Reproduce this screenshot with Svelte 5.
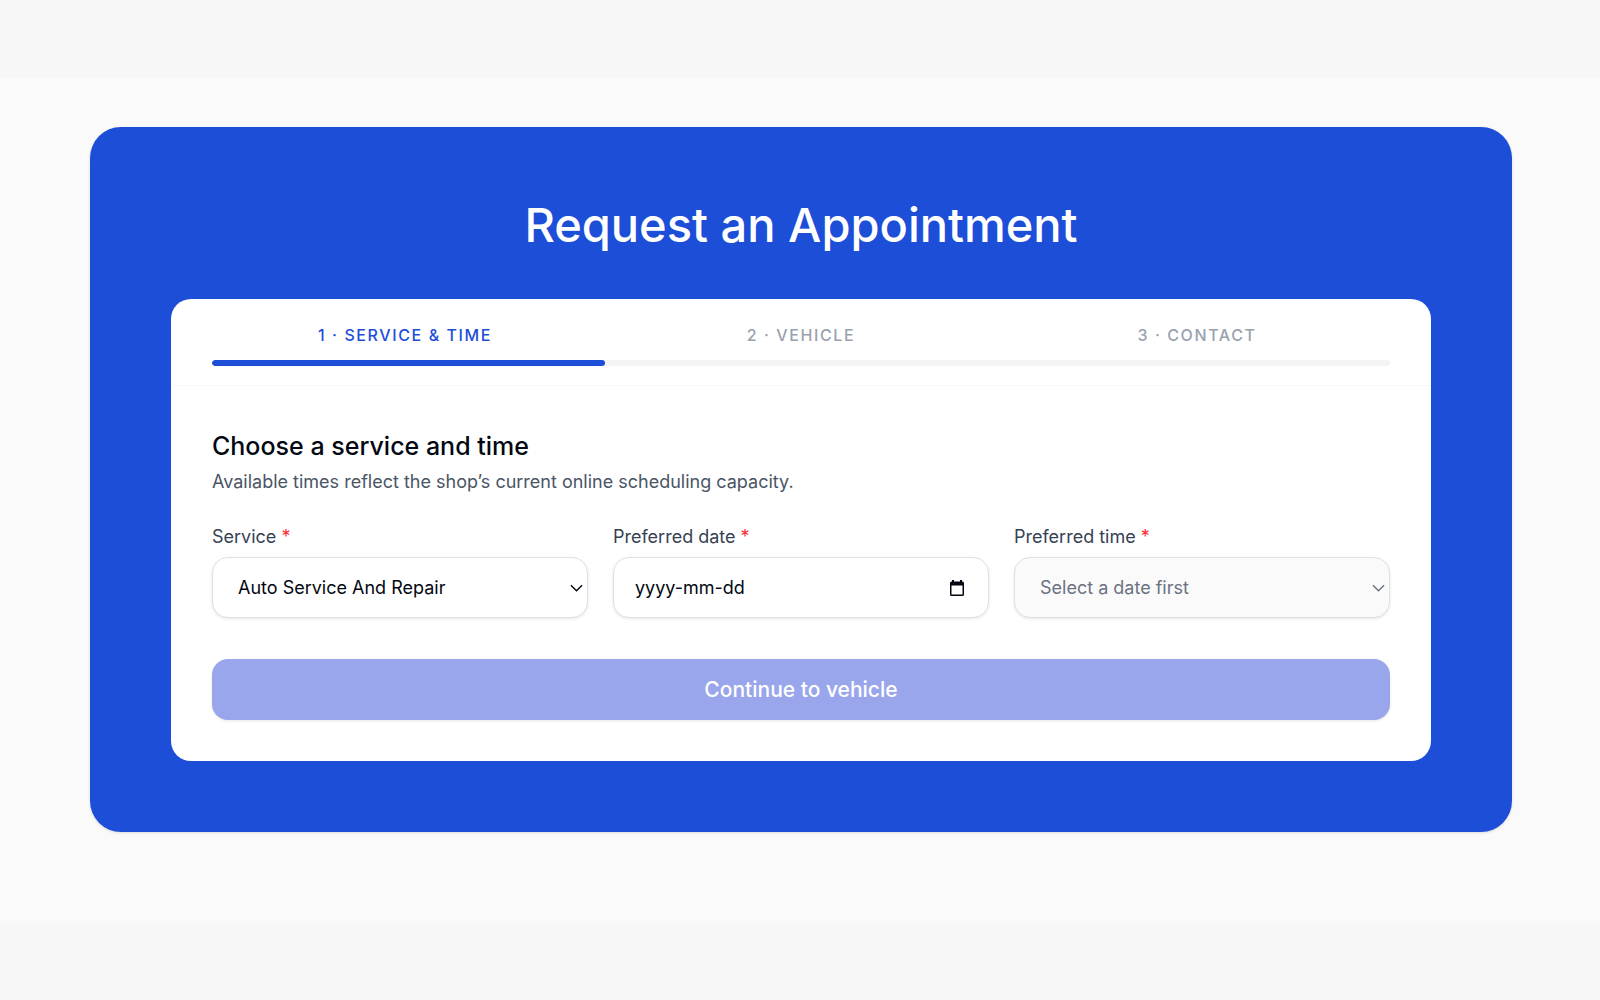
<script lang="ts">
  const steps = ['Service & time', 'Vehicle', 'Contact']
  const services = ['Auto Service And Repair']
  const times = []

  let current = $state(0)
  let service = $state(services[0])
  let date = $state('')
  let time = $state('')
  let dateInput

  let progress = $derived(((current + 1) / steps.length) * 100)
  let ready = $derived(service !== '' && date !== '' && time !== '')

  function handleSubmit(e) {
    e.preventDefault()
    if (ready && current < steps.length - 1) current += 1
  }
</script>

{#snippet chevron()}
  <svg class="chevron" viewBox="0 0 14 8" aria-hidden="true">
    <path d="M1 1l6 6 6-6" />
  </svg>
{/snippet}

<main>
  <div class="band">
    <section class="panel">
      <h1>Request an Appointment</h1>

      <form class="card" onsubmit={handleSubmit}>
        <div class="progress">
          <ol class="steps">
            {#each steps as step, idx (step)}
              <li class:is-active={idx === current}>{idx + 1} · {step}</li>
            {/each}
          </ol>
          <div class="track">
            <div class="bar" style="width: {progress}%"></div>
          </div>
        </div>

        <div class="content">
          <h2>Choose a service and time</h2>
          <p class="hint">Available times reflect the shop’s current online scheduling capacity.</p>

          <div class="fields">
            <div class="field">
              <label for="service">Service <span class="required">*</span></label>
              <div class="control">
                <select id="service" bind:value={service}>
                  {#each services as name}
                    <option value={name}>{name}</option>
                  {/each}
                </select>
                {@render chevron()}
              </div>
            </div>

            <div class="field">
              <label for="date">Preferred date <span class="required">*</span></label>
              <div class="control">
                <input
                  id="date"
                  type="text"
                  placeholder="yyyy-mm-dd"
                  bind:this={dateInput}
                  bind:value={date}
                />
                <button
                  type="button"
                  class="calendar"
                  aria-label="Pick a date"
                  onclick={() => dateInput.focus()}
                >
                  <svg viewBox="0 0 14 16" aria-hidden="true">
                    <path
                      fill-rule="evenodd"
                      d="M2 0h2v1.5h6V0h2v1.5h.5A1.5 1.5 0 0 1 14 3v11.5a1.5 1.5 0 0 1-1.5 1.5h-11A1.5 1.5 0 0 1 0 14.5V3a1.5 1.5 0 0 1 1.5-1.5H2zM1.5 5.5v9h11v-9z"
                    />
                  </svg>
                </button>
              </div>
            </div>

            <div class="field">
              <label for="time">Preferred time <span class="required">*</span></label>
              <div class="control" class:is-disabled={!date}>
                <select id="time" bind:value={time} disabled={!date}>
                  <option value="">Select a date first</option>
                  {#each times as slot}
                    <option value={slot}>{slot}</option>
                  {/each}
                </select>
                {@render chevron()}
              </div>
            </div>
          </div>

          <button type="submit" class="submit" disabled={!ready}>Continue to vehicle</button>
        </div>
      </form>
    </section>
  </div>
</main>

<style>
  :global(body) {
    background: #f7f7f7;
  }

  main {
    padding: 78px 0;
    color: #030712;
    font-family: Inter, 'Open Sans', sans-serif;
    font-size: 18px;
    line-height: 24px;
  }

  .band {
    padding: 49px 88px 91px 90px;
    background: #fafafa;
  }

  .panel {
    max-width: 1422px;
    margin: 0 auto;
    padding: 69px 81px 71px;
    box-sizing: border-box;
    border-radius: 31px;
    background: #1d4ed8;
    box-shadow: 0 1px 3px rgba(0, 0, 0, 0.12);
  }

  h1 {
    margin: 0 0 45px;
    color: #fff;
    font-size: 47px;
    font-weight: 500;
    line-height: 58px;
    text-align: center;
  }

  .card {
    border-radius: 20px;
    background: #fff;
    overflow: hidden;
  }

  .progress {
    padding: 24px 41px 19px;
    border-bottom: 1px solid #f7f7f8;
  }

  .steps {
    display: grid;
    grid-template-columns: repeat(3, 1fr);
    gap: 10px;
    margin: 0 0 13px;
    padding: 0;
    list-style: none;
    color: #99a1af;
    font-size: 16px;
    font-weight: 500;
    letter-spacing: 0.1em;
    text-align: center;
    text-transform: uppercase;
  }

  .steps .is-active {
    color: #1d4ed8;
  }

  .track {
    height: 6px;
    border-radius: 3px;
    background: #f4f4f5;
    overflow: hidden;
  }

  .bar {
    height: 100%;
    border-radius: 3px;
    background: #1d4ed8;
  }

  .content {
    padding: 44px 41px 41px;
  }

  h2 {
    margin: 0 0 8px;
    font-size: 25px;
    font-weight: 500;
    line-height: 32px;
  }

  .hint {
    margin: 0 0 31px;
    color: #4a5565;
  }

  .fields {
    display: grid;
    grid-template-columns: repeat(3, 1fr);
    gap: 25px;
    margin-bottom: 41px;
  }

  .field {
    display: flex;
    flex-direction: column;
    gap: 8px;
  }

  label {
    color: #364153;
  }

  .required {
    color: #fb2c36;
  }

  .control {
    display: flex;
    align-items: center;
    height: 61px;
    box-sizing: border-box;
    border: 1px solid #dfe1e8;
    border-radius: 16px;
    background: #fff;
    box-shadow: 0 1px 3px rgba(0, 0, 0, 0.1);
  }

  .control.is-disabled {
    background: #fafafa;
    color: #6a7282;
  }

  select,
  input {
    flex: 1;
    width: 100%;
    min-width: 0;
    height: 100%;
    padding: 0 21px;
    box-sizing: border-box;
    border: 0;
    border-radius: 16px;
    outline: 0;
    background: transparent;
    color: inherit;
    font: inherit;
    appearance: none;
  }

  select {
    padding: 0 25px;
    opacity: 1;
  }

  input::placeholder {
    color: inherit;
    opacity: 1;
  }

  .control:focus-within {
    border-color: #1d4ed8;
  }

  .chevron {
    flex: none;
    width: 13px;
    height: 8px;
    margin-right: 4px;
    fill: none;
    stroke: currentColor;
    stroke-width: 1.5;
  }

  .calendar {
    display: flex;
    margin-right: 24px;
    padding: 0;
    border: 0;
    background: none;
    color: inherit;
    cursor: pointer;
  }

  .calendar svg {
    width: 14px;
    height: 16px;
    fill: currentColor;
  }

  .submit {
    display: block;
    width: 100%;
    height: 61px;
    border: 0;
    border-radius: 16px;
    background: #1d4ed8;
    box-shadow: 0 1px 3px rgba(0, 0, 0, 0.1);
    color: #fff;
    font: inherit;
    font-size: 21px;
    font-weight: 500;
  }

  .submit:disabled {
    background: #99a6ec;
  }
</style>
